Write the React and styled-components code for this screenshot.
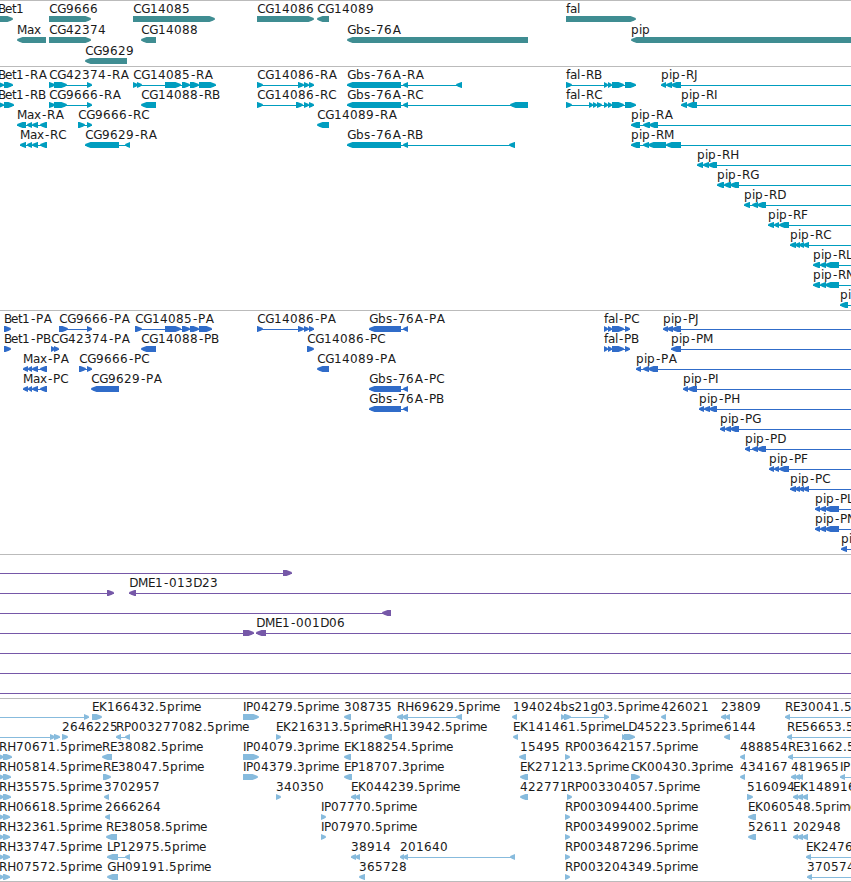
import styled, { createGlobalStyle } from "styled-components";

const GlobalStyle = createGlobalStyle`
  body {
    margin: 0;
    background: #fff;
  }
`;

const Browser = styled.main`
  width: 851px;
  height: 882px;
  overflow: hidden;
  background: #fff;
`;

const Track = styled.section`
  display: flex;
  flex-direction: column;
  padding-bottom: ${(p) => (p.$last ? 2 : 3)}px;
  border-top: 1px solid #bbb;
  border-bottom: ${(p) => (p.$last ? "1px solid #bbb" : "none")};
  box-sizing: border-box;
  height: ${(p) => p.$height}px;
  color: ${(p) => p.$color};
`;

const Lane = styled.svg`
  display: block;
  flex: none;
  width: 100%;
  height: ${(p) => p.$height}px;
  overflow: visible;
`;

const Label = styled.text`
  font-family: "DejaVu Sans", sans-serif;
  font-size: 12px;
  fill: #1a1a1a;
`;

const R = 1;
const L = -1;
const FAR = 870;

const ADVANCES = {
  A: 9, B: 7, C: 8, D: 9, E: 7, F: 7, G: 9, H: 9, I: 3, J: 5, K: 8, L: 6, M: 10, N: 9, P: 7, R: 8,
  a: 7, b: 8, e: 7, f: 4, g: 7, i: 3, l: 3, m: 11, p: 8, r: 5, s: 6, t: 4, x: 7, "-": 6, ".": 4,
};

// glyphs narrower than their cell are nudged towards its middle
const NUDGES = { "-": 1, A: 0.7, C: 0.3, G: 0.2, H: 0.3, D: 0.2 };

function charPositions(text, start) {
  let x = start;
  return text
    .split("")
    .map((c) => {
      const at = x + (NUDGES[c] || 0);
      x += ADVANCES[c] || 8;
      return at;
    })
    .join(" ");
}

// label, direction, blocks, line start, line end, label x
const f = (label, dir, blocks, from, to, labelX) => ({ label, dir, blocks, from, to, labelX });

const pipC = [[790, 796], [795, 800], [799, 804], [803, 809]];
const falTail = [[604, 608], [608, 612], [612, 624]];
const cdsEnd = [[298, 304], [304, 309], [309, 314]];
const rh = (label, end) => f(label, R, [[-4, 4], [3, end]], -4, end, -1);

const tracks = [
  {
    name: "genes", color: "#3f8d92", height: 66, pitch: 21,
    rows: [
      [
        f("Bet1", R, [[-6, 13]], 0, 0, -2), f("CG9666", R, [[49, 91]]), f("CG14085", R, [[133, 215]]),
        f("CG14086", R, [[257, 314]]), f("CG14089", L, [[317, 329]]), f("fal", R, [[566, 636]]),
      ],
      [
        f("Max", L, [[17, 46]]), f("CG42374", R, [[49, 91]]), f("CG14088", L, [[141, 156]]),
        f("Gbs-76A", L, [[347, 528]]), f("pip", L, [[631, FAR]]),
      ],
      [f("CG9629", L, [[85, 127]])],
    ],
  },
  {
    name: "transcripts", color: "#009dbf", height: 244, pitch: 20,
    rows: [
      [
        f("Bet1-RA", R, [[-6, 4], [4, 13]], -6, 13, -2),
        f("CG42374-RA", R, [[49, 55], [54, 67], [87, 92]]),
        f("CG14085-RA", R, [[133, 138], [137, 142], [165, 181], [182, 190], [190, 199], [199, 216]]),
        f("CG14086-RA", R, [[257, 263], ...cdsEnd]),
        f("Gbs-76A-RA", L, [[347, 401], [403, 408], [456, 462]]),
        f("fal-RB", R, [[566, 572], ...falTail, [625, 636]]),
        f("pip-RJ", L, [[661, 666], [666, 672], [671, 681]], 661, FAR),
      ],
      [
        f("Bet1-RB", R, [[-6, 4], [4, 14]], -6, 14, -2),
        f("CG9666-RA", R, [[49, 55], [54, 67], [87, 92]]),
        f("CG14088-RB", L, [[141, 156]]),
        f("CG14086-RC", R, [[257, 263], [296, 303], [304, 309], [309, 314]]),
        f("Gbs-76A-RC", L, [[347, 401], [403, 408], [510, 528]]),
        f("fal-RC", R, [[566, 572], [589, 593], [593, 597], [597, 602], ...falTail, [625, 636]]),
        f("pip-RI", L, [[681, 687], [687, 697]], 681, FAR),
      ],
      [
        f("Max-RA", L, [[17, 26], [27, 32], [32, 38], [40, 47]]),
        f("CG9666-RC", R, [[78, 85], [87, 92]]),
        f("CG14089-RA", L, [[317, 329]]),
        f("pip-RA", L, [[631, 640], [643, 650], [649, 658]], 631, FAR),
      ],
      [
        f("Max-RC", L, [[20, 26], [27, 32], [32, 38], [40, 47]]),
        f("CG9629-RA", L, [[85, 119], [125, 130]]),
        f("Gbs-76A-RB", L, [[347, 401], [403, 408], [509, 515]]),
        f("pip-RM", L, [[631, 640], [643, 649], [648, 666], [666, 681]], 631, FAR),
      ],
      [f("pip-RH", L, [[697, 703], [703, 709], [708, 717]], 697, FAR)],
      [f("pip-RG", L, [[717, 724], [724, 731], [730, 739]], 717, FAR)],
      [f("pip-RD", L, [[744, 750], [752, 758], [757, 766]], 744, FAR)],
      [f("pip-RF", L, [[768, 774], [774, 779], [779, 789]], 768, FAR)],
      [f("pip-RC", L, pipC, 790, FAR)],
      [f("pip-RL", L, [[813, 820], [820, 826], [825, 839]], 813, FAR)],
      [f("pip-RN", L, [[813, 820], [820, 826], [825, 839]], 813, FAR)],
      [f("pi", L, [[840, 848]], 840, FAR)],
    ],
  },
  {
    name: "proteins", color: "#306cc9", height: 244, pitch: 20,
    rows: [
      [
        f("Bet1-PA", R, [[4, 11]]),
        f("CG9666-PA", R, [[59, 68], [87, 92]]),
        f("CG14085-PA", R, [[135, 142], [165, 181], [182, 190], [190, 199], [199, 212]]),
        f("CG14086-PA", R, [[257, 263], ...cdsEnd]),
        f("Gbs-76A-PA", L, [[369, 401], [403, 408]]),
        f("fal-PC", R, [...falTail, [625, 630]]),
        f("pip-PJ", L, [[663, 668], [667, 673], [672, 681]], 663, FAR),
      ],
      [
        f("Bet1-PB", R, [[4, 11]]),
        f("CG42374-PA", R, [[51, 55], [54, 59]]),
        f("CG14088-PB", L, [[141, 156]]),
        f("CG14086-PC", R, [[307, 314]]),
        f("fal-PB", R, [...falTail, [625, 630]]),
        f("pip-PM", L, [[671, 681]], 671, FAR),
      ],
      [
        f("Max-PA", L, [[23, 28], [28, 32], [32, 38], [40, 47]]),
        f("CG9666-PC", R, [[79, 86], [87, 92]]),
        f("CG14089-PA", L, [[317, 329]]),
        f("pip-PA", L, [[636, 641], [643, 649], [648, 658]], 636, FAR),
      ],
      [
        f("Max-PC", L, [[23, 28], [28, 32], [32, 38], [40, 47]]),
        f("CG9629-PA", L, [[91, 119]]),
        f("Gbs-76A-PC", L, [[369, 401], [403, 408]]),
        f("pip-PI", L, [[683, 688], [688, 697]], 683, FAR),
      ],
      [
        f("Gbs-76A-PB", L, [[369, 401], [403, 408]]),
        f("pip-PH", L, [[699, 704], [704, 710], [709, 717]], 699, FAR),
      ],
      [f("pip-PG", L, [[720, 725], [725, 731], [730, 739]], 720, FAR)],
      [f("pip-PD", L, [[745, 750], [752, 758], [757, 766]], 745, FAR)],
      [f("pip-PF", L, [[769, 774], [774, 779], [779, 789]], 769, FAR)],
      [f("pip-PC", L, pipC, 790, FAR)],
      [f("pip-PL", L, [[815, 820], [820, 826], [825, 839]], 815, FAR)],
      [f("pip-PN", L, [[815, 820], [820, 826], [825, 839]], 815, FAR)],
      [f("pi", L, [[841, 847]], 841, FAR)],
    ],
  },
  {
    name: "clones", color: "#7658a8", height: 144, pitch: 20,
    rows: [
      [f("", R, [[283, 292]], -10, 292)],
      [f("", R, [[107, 114]], -10, 114), f("DME1-013D23", L, [[129, 136]], 129, FAR)],
      [f("", L, [[382, 391]], -10, 391)],
      [f("", R, [[243, 254]], -10, 254), f("DME1-001D06", L, [[256, 266]], 256, FAR)],
      [f("", R, [], -10, FAR)],
      [f("", R, [], -10, FAR)],
      [f("", R, [], -10, FAR)],
    ],
  },
  {
    name: "ests", color: "#87bbdd", height: 184, pitch: 20,
    rows: [
      [
        f("", R, [[84, 89]], -10, 89), f("EK166432.5prime", R, [[92, 102]]),
        f("IP04279.5prime", R, [[243, 259]]), f("308735", L, [[344, 351]]),
        f("RH69629.5prime", L, [[397, 403], [402, 408], [456, 462]]), f("194024", L, [[512, 517]], 0, 0, 513),
        f("bs21g03.5prime", R, [[561, 565], [564, 571], [604, 609]], 0, 0, 560.5), f("426021", L, [[661, 666]]),
        f("23809", L, [[721, 726], [725, 730]]), f("RE30041.5", L, [[785, 790]], 785, FAR),
      ],
      [
        f("", R, [[50, 55], [54, 60]], -10, 60), f("2646225", R, [[62, 68]]),
        f("RP003277082.5prime", L, [[116, 121], [125, 130]]), f("EK216313.5prime", R, [[276, 281]]),
        f("RH13942.5prime", L, [[384, 392]]), f("EK141461.5prime", L, [[513, 518]]),
        f("LD45223.5prime", R, [[622, 626], [624, 635]]), f("6144", L, [[724, 730]]),
        f("RE56653.5", L, [[787, 792]], 787, FAR),
      ],
      [
        rh("RH70671.5prime", 12), f("RE38082.5prime", L, [[102, 112]]), f("IP04079.3prime", R, [[243, 259]]),
        f("EK188254.5prime", L, [[344, 351]]), f("15495", L, [[519, 526]], 0, 0, 520),
        f("RP003642157.5prime", R, [[565, 570]]), f("488854", L, [[740, 745]]),
        f("RE31662.5", L, [[788, 793]], 788, FAR),
      ],
      [
        rh("RH05814.5prime", 11), f("RE38047.5prime", R, [[103, 111]]), f("IP04379.3prime", R, [[243, 258]]),
        f("EP18707.3prime", L, [[344, 352]]), f("EK271213.5prime", L, [[520, 528]]),
        f("CK00430.3prime", R, [[631, 640]]), f("434167", L, [[740, 745]]),
        f("481965", L, [[791, 796], [795, 800], [798, 803]]), f("IP", L, [[840, 845]], 840, FAR),
      ],
      [
        rh("RH35575.5prime", 11), f("3702957", L, [[104, 109]]), f("340350", R, [[276, 281]]),
        f("EK044239.5prime", L, [[351, 356], [355, 360]]), f("422771", L, [[520, 528]]),
        f("RP003304057.5prime", R, [[567, 572]]), f("516094", R, [[747, 753]]),
        f("EK148916", L, [[793, 798], [797, 803], [802, 808]]),
      ],
      [
        rh("RH06618.5prime", 10), f("2666264", L, [[105, 110]]), f("IP07770.5prime", R, [[321, 326]]),
        f("RP003094400.5prime", R, [[565, 570]]), f("EK060548.5prime", L, [[748, 756]]),
      ],
      [
        rh("RH32361.5prime", 10), f("RE38058.5prime", L, [[106, 117]]), f("IP07970.5prime", R, [[321, 326]]),
        f("RP003499002.5prime", R, [[565, 570]]), f("52611", L, [[748, 756]]),
        f("202948", L, [[793, 798], [797, 803], [802, 808]]),
      ],
      [
        rh("RH33747.5prime", 10), f("LP12975.5prime", L, [[107, 118], [125, 130]]),
        f("38914", L, [[351, 356], [355, 360]]), f("201640", L, [[400, 404], [403, 408], [510, 515]]),
        f("RP003487296.5prime", R, [[565, 570]]), f("EK2476", L, [[806, 811]], 806, FAR),
      ],
      [
        rh("RH07572.5prime", 10), f("GH09191.5prime", L, [[107, 118]]), f("365728", L, [[359, 365]]),
        f("RP003204349.5prime", R, [[565, 570]]), f("370574", L, [[807, 812]], 807, FAR),
      ],
    ],
  },
];

function Block({ start, end, dir }) {
  const tip = Math.min(end - start, 5.5);
  const nose = dir === R ? end : start;
  const tail = dir === R ? start : end;
  // the head bulges a little on its way to the nose
  const points = [
    [tail, 15],
    [nose - dir * tip, 15],
    [nose - dir * tip * 0.4, 16.2],
    [nose, 17.4],
    [nose, 18.6],
    [nose - dir * tip * 0.4, 19.8],
    [nose - dir * tip, 21],
    [tail, 21],
  ];
  return <polygon points={points.map((p) => p.join(",")).join(" ")} fill="currentColor" />;
}

function Feature({ label, dir, blocks, from, to, labelX }) {
  const first = blocks.length ? blocks[0][0] : from;
  const last = blocks.length ? blocks[blocks.length - 1][1] : to;
  const lineStart = to ? from : first;
  const lineEnd = to || last;
  const hasLine = blocks.length !== 1 || to;

  return (
    <g>
      {hasLine ? <rect x={lineStart} y="18" width={lineEnd - lineStart} height="1" fill="currentColor" /> : null}
      {blocks.map(([start, end]) => (
        <Block key={start} start={start} end={end} dir={dir} />
      ))}
      {label && (
        <Label x={charPositions(label, labelX ?? first)} y="12">
          {label}
        </Label>
      )}
    </g>
  );
}

export default function App() {
  return (
    <Browser>
      <GlobalStyle />
      {tracks.map((track, i) => (
        <Track key={track.name} $color={track.color} $height={track.height} $last={i === tracks.length - 1}>
          {track.rows.map((row, j) => (
            <Lane key={j} $height={track.pitch}>
              {row.map((feature) => (
                <Feature key={feature.label || "unnamed"} {...feature} />
              ))}
            </Lane>
          ))}
        </Track>
      ))}
    </Browser>
  );
}
